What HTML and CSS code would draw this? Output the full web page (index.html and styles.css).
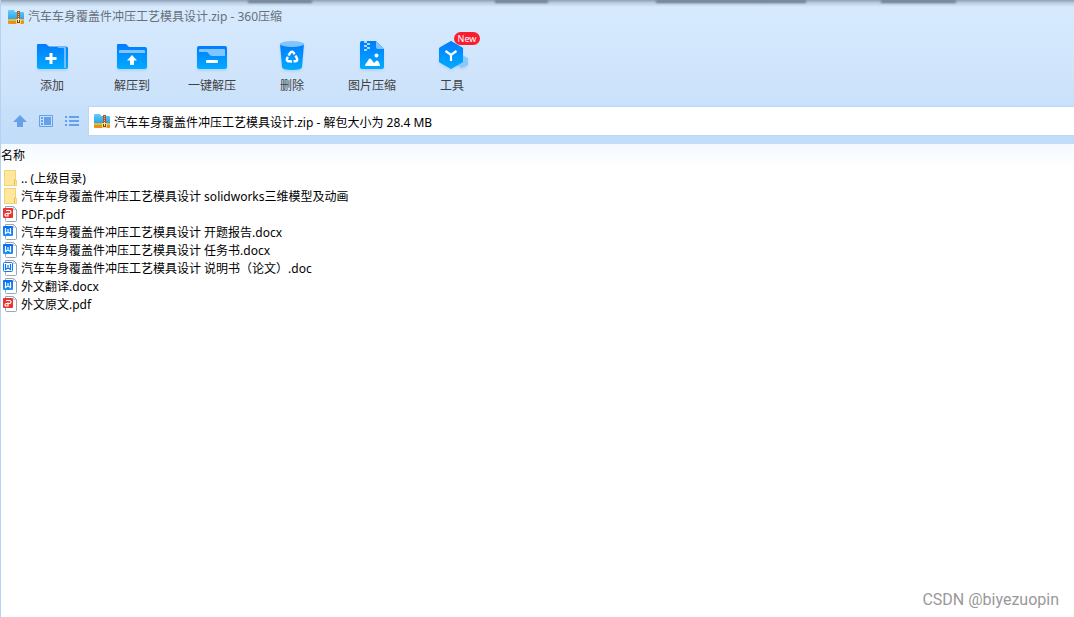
FILE: index.html
```html
<!DOCTYPE html>
<html lang="zh-CN">
<head>
<meta charset="utf-8">
<meta name="viewport" content="width=device-width, initial-scale=1">
<title>汽车车身覆盖件冲压工艺模具设计.zip - 360压缩</title>
<link rel="stylesheet" href="styles.css">
</head>
<body>
<svg class="defs" aria-hidden="true">
  <defs>
    <linearGradient id="blue" x1="0" y1="0" x2="0" y2="1"><stop offset="0" stop-color="#007cff"/><stop offset="1" stop-color="#00abff"/></linearGradient>
    <linearGradient id="sky" x1="0" y1="0" x2="0" y2="1"><stop offset="0" stop-color="#62cdfa"/><stop offset="1" stop-color="#2aa0ea"/></linearGradient>
    <linearGradient id="word" x1="0" y1="0" x2="0" y2="1"><stop offset="0" stop-color="#0a67f5"/><stop offset="1" stop-color="#1693f8"/></linearGradient>
    <symbol id="zip" viewBox="0 0 16 15">
      <path d="M0 1q0-1 1-1h5l1 2h8q1 0 1 1v7H0z" fill="url(#sky)"/>
      <path d="M0 9h16v2H0z" fill="#ffb02e"/>
      <path d="M0 11h16v1H0z" fill="#7cc043"/>
      <path d="M0 12h16v1q0 1-1 1H1q-1 0-1-1z" fill="#f78a1c"/>
      <path d="M9 1h3v8H9z" fill="#a85a24"/>
      <path d="M10 2h1v1h-1zM10 4h1v1h-1zM10 6h1v1h-1z" fill="#f0b565"/>
      <path d="M8.500 9.500h4v4h-4z" fill="#7c3b12" stroke="#ffdf80"/>
      <path d="M10 8h1v4h-1z" fill="#fff0c0"/>
    </symbol>
    <symbol id="folder" viewBox="0 0 16 18">
      <path d="M2 1h12v10h1v6H2z" fill="#ffe79c"/>
      <path d="M2.500 1.500h11v10h1v5h-12z" fill="none" stroke="#f0d27a"/>
      <path d="M12.500 16v-4.500q0-1 1-1" fill="none" stroke="#e4bb45"/>
    </symbol>
    <symbol id="page" viewBox="0 0 16 18">
      <path d="M3.500 1.500h8l3 3v11q0 1-1 1h-9q-1 0-1-1z" fill="#fff" stroke="#9ba6b2"/>
      <path d="M11.500 2v2.500H14" fill="none" stroke="#c4cbd3"/>
    </symbol>
    <symbol id="pdf" viewBox="0 0 16 18">
      <use href="#page"/>
      <rect x="1" y="3" width="10" height="10" rx="1" fill="#e93434"/>
      <path d="M4 5.500h3.500q1.500 0 1.500 1.500t-1.500 1.500H4.500q-1.500 0-1.500 1.300T4.500 11H6V7.500" fill="none" stroke="#fff" stroke-width="1.200"/>
    </symbol>
    <symbol id="docx" viewBox="0 0 16 18">
      <use href="#page"/>
      <rect x="1" y="3" width="10" height="10" rx="1" fill="url(#word)"/>
      <path d="M3.500 5v5.500L6 9l2.500 1.500V5M6 6v3" fill="none" stroke="#fff" stroke-width="1.200"/>
    </symbol>
    <symbol id="doc" viewBox="0 0 16 18">
      <use href="#page"/>
      <rect x="1.500" y="3.500" width="9" height="9" rx="1" fill="#fff" stroke="#1277f3"/>
      <path d="M3.500 5v5.500L6 9l2.500 1.500V5M6 6v3" fill="none" stroke="#0a70ef" stroke-width="1.200"/>
    </symbol>
  </defs>
</svg>
<div class="window">
  <header class="chrome">
    <div class="edge"><i></i><i></i><i></i><i></i></div>
    <h1 class="title"><svg class="zip-icon"><use href="#zip"/></svg>汽车车身覆盖件冲压工艺模具设计.zip - 360压缩</h1>
    <nav class="toolbar">
      <button class="tool" type="button">
        <svg class="tool-icon" viewBox="0 0 32 32">
          <path d="M1 5q0-1 1-1h8l3 2.500h17q2 0 2 2V27q0 2-2 2H3q-2 0-2-2z" fill="url(#blue)"/>
          <path d="M22 6.500h7q1 0 1 1V28h-2V9q0-1-1-1h-5z" fill="#75bdff"/>
          <path d="M13.500 13h3v4h4v3h-4v4h-3v-4h-4v-3h4z" fill="#fff"/>
        </svg><span>添加</span></button>
      <button class="tool" type="button">
        <svg class="tool-icon" viewBox="0 0 32 32">
          <path d="M1 5q0-1 1-1h8l3 3h16q2 0 2 2v18q0 2-2 2H3q-2 0-2-2z" fill="url(#blue)"/>
          <path d="M3 13v-2q0-1 1-1h24q1 0 1 1v2z" fill="#80c5ff"/>
          <path d="M16 15l5 5.500h-3V25h-4v-4.500h-3z" fill="#fff"/>
        </svg><span>解压到</span></button>
      <button class="tool" type="button">
        <svg class="tool-icon" viewBox="0 0 32 32">
          <rect x="1" y="6" width="30" height="23" rx="2" fill="url(#blue)"/>
          <path d="M3 12v-2q0-1 1-1h24q1 0 1 1v6H16q-2 0-3-2l-2-2z" fill="#80c5ff"/>
          <rect x="10" y="20" width="12" height="3" rx="1" fill="#fff"/>
        </svg><span>一键解压</span></button>
      <button class="tool" type="button">
        <svg class="tool-icon" viewBox="0 0 32 32">
          <path d="M4 4h24l-2 23q0 3-10 3T6 27z" fill="url(#blue)"/>
          <ellipse cx="16" cy="4" rx="12" ry="3" fill="#80c5ff"/>
          <g fill="none" stroke="#fff" stroke-width="2.400">
            <path id="arc" d="M12.500 15.500l2-3q1.500-1.500 3 0l1 1.800"/>
            <use href="#arc" transform="rotate(120 16 17.500)"/>
            <use href="#arc" transform="rotate(240 16 17.500)"/>
          </g>
        </svg><span>删除</span></button>
      <button class="tool" type="button">
        <svg class="tool-icon" viewBox="0 0 32 32">
          <path d="M4 3q0-2 2-2h14l8 8v18q0 2-2 2H6q-2 0-2-2z" fill="url(#blue)"/>
          <path d="M20 1l8 8h-6q-2 0-2-2z" fill="#80c5ff"/>
          <path d="M8 1h3v2H8zM11 3h3v2h-3zM8 5h3v2H8zM11 7h3v2h-3zM8 9h3v2H8z" fill="#a9d8ff"/>
          <circle cx="20.500" cy="15.500" r="2" fill="#fff"/>
          <path d="M9 26q0-2 2-4l2-3q1-1 2 0l3 4 2-2q1-1 2 0 2 2 2 5z" fill="#fff"/>
        </svg><span>图片压缩</span></button>
      <button class="tool" type="button">
        <svg class="tool-icon" viewBox="0 0 32 32">
          <path d="M26 15l6 3v7l-6 3-6-3v-7z" fill="#8bc8fb"/>
          <path d="M15 1.500l11.500 6.500v14L15 28.500 3.500 22V8z" fill="url(#blue)" stroke="url(#blue)" stroke-linejoin="round"/>
          <path d="M9.500 11l5.500 4 5.500-4M15 15v6" fill="none" stroke="#fff" stroke-width="2.200"/>
        </svg><span>工具</span><b class="badge">New</b></button>
    </nav>
    <div class="address-row">
      <button class="nav-button" type="button" aria-label="向上"><svg viewBox="0 0 16 16"><path d="M8 2l7 7h-4v5H5V9H1z" fill="#66a0ea"/></svg></button>
      <button class="nav-button" type="button" aria-label="预览"><svg viewBox="0 0 16 16"><path d="M1.500 2.500h13v11h-13z" fill="none" stroke="#66a0ea"/><path d="M3 4h2v2H3zM3 7h2v2H3zM3 10h2v2H3zM6 4h7v8H6z" fill="#66a0ea"/></svg></button>
      <button class="nav-button" type="button" aria-label="列表"><svg viewBox="0 0 16 16"><path d="M1 3h2v2H1zM5 3h10v2H5zM1 7h2v2H1zM5 7h10v2H5zM1 11h2v2H1zM5 11h10v2H5z" fill="#66a0ea"/></svg></button>
      <label class="address"><svg class="zip-icon"><use href="#zip"/></svg><input type="text" aria-label="路径" value="汽车车身覆盖件冲压工艺模具设计.zip - 解包大小为 28.4 MB"></label>
    </div>
  </header>
  <main class="content">
    <table class="files">
      <thead><tr><th>名称</th></tr></thead>
      <tbody>
        <tr><td><div class="file"><svg><use href="#folder"/></svg>.. (上级目录)</div></td></tr>
        <tr><td><div class="file"><svg><use href="#folder"/></svg>汽车车身覆盖件冲压工艺模具设计 solidworks三维模型及动画</div></td></tr>
        <tr><td><div class="file"><svg><use href="#pdf"/></svg>PDF.pdf</div></td></tr>
        <tr><td><div class="file"><svg><use href="#docx"/></svg>汽车车身覆盖件冲压工艺模具设计 开题报告.docx</div></td></tr>
        <tr><td><div class="file"><svg><use href="#docx"/></svg>汽车车身覆盖件冲压工艺模具设计 任务书.docx</div></td></tr>
        <tr><td><div class="file"><svg><use href="#doc"/></svg>汽车车身覆盖件冲压工艺模具设计 说明书（论文）.doc</div></td></tr>
        <tr><td><div class="file"><svg><use href="#docx"/></svg>外文翻译.docx</div></td></tr>
        <tr><td><div class="file"><svg><use href="#pdf"/></svg>外文原文.pdf</div></td></tr>
      </tbody>
    </table>
    <footer class="credit">CSDN @biyezuopin</footer>
  </main>
</div>
</body>
</html>
```
FILE: styles.css
```css
* { box-sizing: border-box; }
body {
  margin: 0;
  font: 12px/18px "Noto Sans", "Noto Sans CJK SC", sans-serif;
  color: #000;
}
button, input { font: inherit; color: inherit; border: 0; padding: 0; background: none; }
.defs { position: absolute; width: 0; height: 0; }
.window {
  min-height: 100vh;
  display: flex;
  flex-direction: column;
  border-left: 1px solid #b5d2f3;
}
.chrome {
  position: relative;
  padding-bottom: 8px;
  background: linear-gradient(#d7eafe, #d0e5fc 50%, #c0dcf8);
}
.edge {
  position: absolute;
  inset: 0 0 auto;
  height: 7px;
  background: linear-gradient(#8c9fb4, #b9cce0 40%, #d7eafe00);
}
.edge i {
  position: absolute;
  top: 0;
  left: 23%;
  width: 6%;
  height: 3px;
  background: #6e7d91;
  filter: blur(1px);
}
.edge i:nth-child(2) { left: 46%; width: 5%; }
.edge i:nth-child(3) { left: 61%; width: 14%; }
.edge i:nth-child(4) { left: 82%; width: 7%; }
.title {
  position: relative;
  display: flex;
  align-items: center;
  gap: 4px;
  margin: 0;
  padding: 8px 7px 6px;
  font-size: 12px;
  font-weight: 400;
  color: #686f78;
}
.zip-icon { flex: none; width: 16px; height: 15px; }
.toolbar { display: flex; padding: 8px 11px 0; }
.tool {
  position: relative;
  flex: none;
  width: 80px;
  display: flex;
  flex-direction: column;
  align-items: center;
  gap: 5px;
  color: #414141;
}
.tool-icon { width: 32px; height: 32px; overflow: visible; filter: drop-shadow(0 2px 1px #4b9dee33); }
.badge {
  position: absolute;
  top: -8px;
  left: 42px;
  width: 26px;
  border-radius: 7px;
  background: #f91e2f;
  color: #fff;
  font-size: 9px;
  font-weight: 400;
  line-height: 13px;
}
.address-row { display: flex; align-items: center; gap: 10px; padding: 11px 0 0 11px; }
.nav-button { width: 16px; height: 16px; }
.nav-button svg { display: block; }
.address {
  flex: 1;
  display: flex;
  align-items: center;
  gap: 4px;
  height: 30px;
  margin-left: -2px;
  padding-left: 5px;
  background: #fff;
  border: solid #bbd7f4;
  border-width: 1px 0 1px 1px;
}
.address input { flex: 1; min-width: 0; height: 20px; padding-top: 2px; outline: 0; }
.content {
  flex: 1;
  display: flex;
  flex-direction: column;
  justify-content: space-between;
  background: linear-gradient(#f4f9ff, #fff 24px);
}
.files { width: 100%; border-collapse: collapse; }
.files th { padding: 3px 0 4px; text-align: left; font-weight: 400; }
.files td { padding: 0; }
.file { display: flex; gap: 3px; padding-left: 1px; height: 18px; line-height: 20px; white-space: pre; }
.file svg { flex: none; width: 16px; height: 18px; }
.credit {
  padding: 0 15px 5px;
  text-align: right;
  font: 16px/24px "Roboto", sans-serif;
  color: #999;
}
```
